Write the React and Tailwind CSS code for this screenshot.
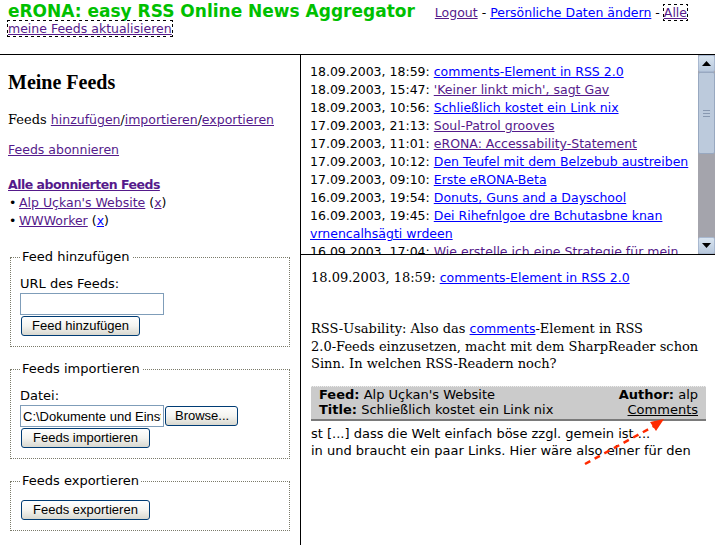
import React from 'react';

const BLUE = 'text-[#0000ff]';
const PURPLE = 'text-[#551a8b]';

const items = [
  { date: '18.09.2003, 18:59:', title: 'comments-Element in RSS 2.0', visited: false },
  { date: '18.09.2003, 15:47:', title: "'Keiner linkt mich', sagt Gav", visited: true },
  { date: '18.09.2003, 10:56:', title: 'Schließlich kostet ein Link nix', visited: false },
  { date: '17.09.2003, 21:13:', title: 'Soul-Patrol grooves', visited: true },
  { date: '17.09.2003, 11:01:', title: 'eRONA: Accessability-Statement', visited: true },
  { date: '17.09.2003, 10:12:', title: 'Den Teufel mit dem Belzebub austreiben', visited: false },
  { date: '17.09.2003, 09:10:', title: 'Erste eRONA-Beta', visited: false },
  { date: '16.09.2003, 19:54:', title: 'Donuts, Guns and a Dayschool', visited: false },
  { date: '16.09.2003, 19:45:', title: 'Dei Rihefnlgoe dre Bchutasbne knan vrnencalhsägti wrdeen', visited: false },
  { date: '16.09.2003, 17:04:', title: 'Wie erstelle ich eine Strategie für mein Weblog?', visited: true },
];

const XpButton = ({ children, className = '' }) => (
  <button
    className={`h-[20px] rounded-[3px] border border-[#003c74] bg-linear-to-b from-white via-[#f4f4f0] to-[#d8d8d0] px-[9px] text-[13px] leading-[16px] text-black font-['Liberation_Sans'] ${className}`}
  >
    {children}
  </button>
);

const Box = ({ legend, children, className = '' }) => (
  <fieldset className={`ml-[2px] w-[280px] border border-dotted border-[#7a7a6a] pl-[9px] pb-[10px] ${className}`}>
    <legend className="px-[2px] text-[13px] leading-[16px]">{legend}</legend>
    {children}
  </fieldset>
);

const ScrollArrow = ({ down }) => (
  <div className="h-[17px] w-[17px] rounded-[2px] border border-[#a8b8d0] bg-linear-to-b from-[#d8e4f0] to-[#b8c8dc] flex items-center justify-center">
    <svg width="9" height="5" viewBox="0 0 9 5">
      {down ? <path d="M0 0h9L4.5 5z" fill="#000" /> : <path d="M0 5h9L4.5 0z" fill="#000" />}
    </svg>
  </div>
);

export default function App() {
  return (
    <div className="relative w-[715px] h-[545px] overflow-hidden bg-white text-black font-['DejaVu_Sans',sans-serif]">
      <header className="h-[55px] border-b border-black px-2 pt-[4px] leading-[15px]">
        <span className="text-[17px] font-bold text-[#00c000] mr-[20px]">eRONA: easy RSS Online News Aggregator</span>
        <span className="text-[12.5px]">
          <a className={`${PURPLE} underline`}>Logout</a> - <a className={`${BLUE} underline`}>Persönliche Daten ändern</a> -{' '}
          <a className={`${PURPLE} underline outline-1 outline-dotted outline-black`}>Alle meine Feeds aktualisieren</a>
        </span>
      </header>

      <div className="flex h-[490px]">
        <aside className="w-[301px] shrink-0 border-r border-black px-2">
          <h2 className="mt-[16px] text-[20px] leading-[22px] font-bold font-['Liberation_Serif',serif]">Meine Feeds</h2>
          <p className="mt-[17px] leading-[18px]">
            <span className="text-[13px] font-['DejaVu_Serif',serif]">Feeds </span>
            <span className="text-[12.5px]">
              <a className={`${PURPLE} underline`}>hinzufügen</a>/<a className={`${PURPLE} underline`}>importieren</a>/<a className={`${PURPLE} underline`}>exportieren</a>
            </span>
          </p>
          <p className="mt-[12px] text-[12.5px] leading-[18px]">
            <a className={`${PURPLE} underline`}>Feeds abonnieren</a>
          </p>
          <p className="mt-[17px] text-[12.5px] leading-[18px] font-bold tracking-[-0.5px]">
            <a className={`${PURPLE} underline`}>Alle abonnierten Feeds</a>
          </p>
          <ul className="text-[12.5px] leading-[18px]">
            <li className="flex">
              <span className="w-[11px] pl-[1px]">•</span>
              <span>
                <a className={`${PURPLE} underline`}>Alp Uçkan's Website</a> (<a className={`${PURPLE} underline`}>x</a>)
              </span>
            </li>
            <li className="flex">
              <span className="w-[11px] pl-[1px]">•</span>
              <span>
                <a className={`${PURPLE} underline`}>WWWorker</a> (<a className={`${BLUE} underline`}>x</a>)
              </span>
            </li>
          </ul>

          <Box legend="Feed hinzufügen" className="mt-[19px]">
            <div className="mt-[11px] text-[13px] leading-[16px]">URL des Feeds:</div>
            <input type="text" readOnly className="mt-[1px] block h-[22px] w-[144px] border border-[#7f9db9] bg-white" />
            <XpButton className="mt-[1px] ml-[1px] block w-[119px]">Feed hinzufügen</XpButton>
          </Box>

          <Box legend="Feeds importieren" className="mt-[14px]">
            <div className="mt-[11px] text-[13px] leading-[16px]">Datei:</div>
            <div className="mt-[1px] flex items-center">
              <input
                type="text"
                readOnly
                value="C:\Dokumente und Einstellungen\alp\feeds.opml"
                className="block h-[22px] w-[144px] border border-[#7f9db9] bg-white px-[2px] text-[13px] font-['Liberation_Sans']"
              />
              <XpButton className="ml-[1px] w-[73px] px-0">Browse...</XpButton>
            </div>
            <XpButton className="mt-[1px] ml-[1px] block w-[129px]">Feeds importieren</XpButton>
          </Box>

          <Box legend="Feeds exportieren" className="mt-[14px]">
            <XpButton className="mt-[11px] ml-[1px] block w-[129px]">Feeds exportieren</XpButton>
          </Box>
        </aside>

        <main className="flex-1 flex flex-col min-w-0">
          <div className="h-[200px] shrink-0 border-b border-black flex">
            <div className="flex-1 overflow-hidden pl-[9px] pr-[3px] pt-2 text-[12.5px] leading-[18px]">
              {items.map((it) => (
                <div key={it.date + it.title}>
                  {it.date} <a className={`${it.visited ? PURPLE : BLUE} underline`}>{it.title}</a>
                </div>
              ))}
            </div>
            <div className="w-[17px] shrink-0 flex flex-col bg-[#a4a4ac]">
              <ScrollArrow />
              <div className="h-[82px] rounded-[2px] border border-[#98a8c0] bg-[#bccadc] flex flex-col items-center justify-center gap-[2px]">
                <div className="h-px w-[7px] bg-[#8898b0]" />
                <div className="h-px w-[7px] bg-[#8898b0]" />
                <div className="h-px w-[7px] bg-[#8898b0]" />
              </div>
              <div className="flex-1" />
              <ScrollArrow down />
            </div>
          </div>

          <div className="flex-1 pl-[10px] pr-[9px]">
            <div className="mt-[13px] leading-[18px]">
              <span className="text-[13px] font-['DejaVu_Serif',serif]">18.09.2003, 18:59: </span>
              <a className={`${BLUE} underline text-[12.5px]`}>comments-Element in RSS 2.0</a>
            </div>
            <p className="mt-[33px] text-[13px] leading-[17.5px] font-['DejaVu_Serif',serif]">
              RSS-Usability: Also das <a className={`${BLUE} underline text-[12.5px] font-['DejaVu_Sans']`}>comments</a>-Element in RSS{' '}
              <span className="whitespace-nowrap">2.0-Feeds</span> einzusetzen, macht mit dem SharpReader schon Sinn. In welchen RSS-Readern noch?
            </p>
            <div className="mt-[13px] border-b-2 border-[#7a7a7a] bg-[#cbcbcb]">
              <div className="border-t border-dotted border-[#ececec] px-2 pb-[1px] text-[13px] leading-[15.5px]">
                <div className="flex justify-between">
                  <span><b>Feed:</b> Alp Uçkan's Website</span>
                  <span><b>Author:</b> alp</span>
                </div>
                <div className="flex justify-between">
                  <span><b>Title:</b> Schließlich kostet ein Link nix</span>
                  <a className="underline">Comments</a>
                </div>
              </div>
            </div>
            <div className="mt-[4px] text-[13px] leading-[17px] whitespace-nowrap">
              <div>st [...] dass die Welt einfach böse zzgl. gemein ist ...</div>
              <div>in und braucht ein paar Links. Hier wäre also einer für den</div>
            </div>
          </div>
        </main>
      </div>

      <svg className="absolute left-[580px] top-[410px]" width="92" height="60" viewBox="0 0 92 60">
        <line x1="5" y1="54" x2="76" y2="15" stroke="#ff2a00" strokeWidth="2.5" strokeDasharray="6 5" />
        <path d="M84 9 L70 12 L76 21 Z" fill="#ff2a00" />
      </svg>
    </div>
  );
}
